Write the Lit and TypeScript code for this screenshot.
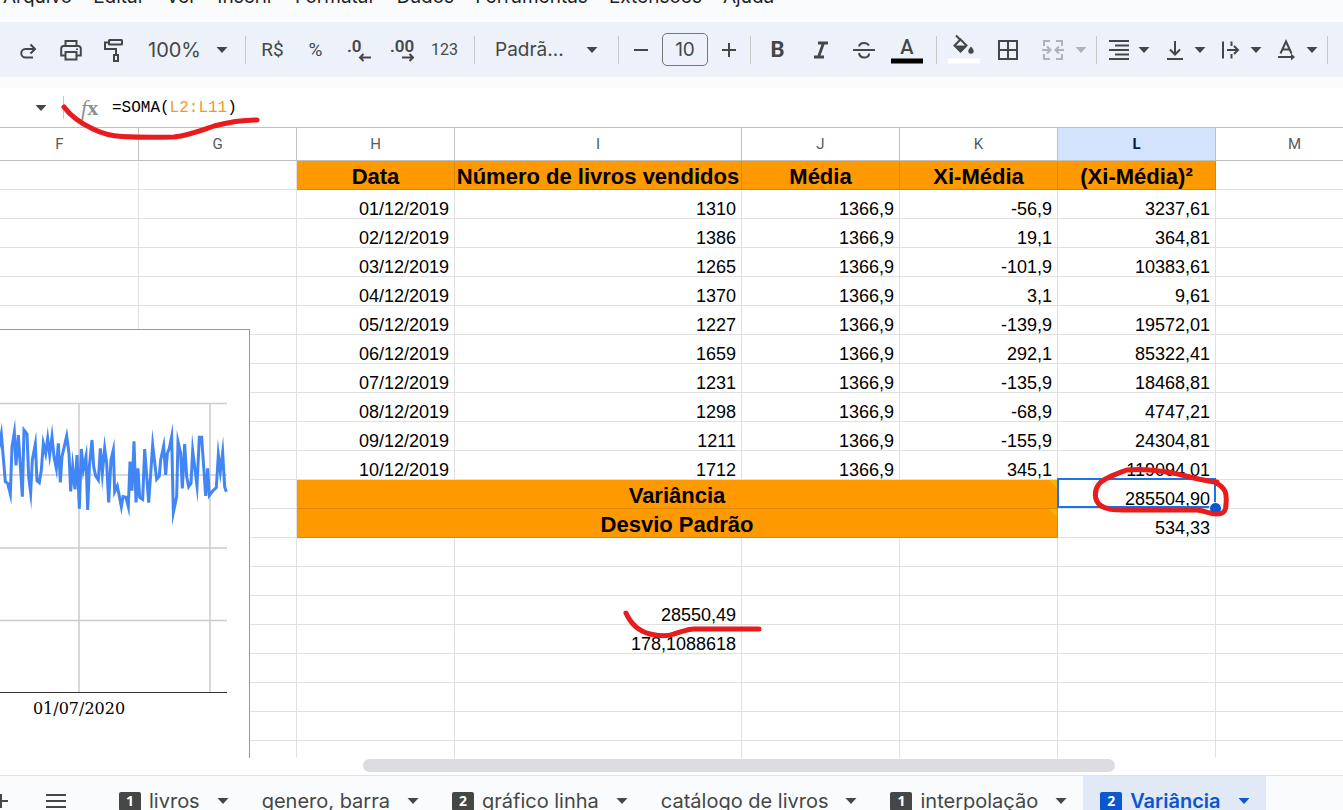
import { LitElement, html, svg, css, nothing } from "lit";
import { customElement, property, state } from "lit/decorators.js";
import { classMap } from "lit/directives/class-map.js";

const MENUS = ["Arquivo", "Editar", "Ver", "Inserir", "Formatar", "Dados", "Ferramentas", "Extensões", "Ajuda"];
const COLUMNS = ["F", "G", "H", "I", "J", "K", "L", "M"];
const HEADINGS = ["Data", "Número de livros vendidos", "Média", "Xi-Média", "(Xi-Média)²"];
const SALES: string[][] = [
  ["01/12/2019", "1310", "1366,9", "-56,9", "3237,61"],
  ["02/12/2019", "1386", "1366,9", "19,1", "364,81"],
  ["03/12/2019", "1265", "1366,9", "-101,9", "10383,61"],
  ["04/12/2019", "1370", "1366,9", "3,1", "9,61"],
  ["05/12/2019", "1227", "1366,9", "-139,9", "19572,01"],
  ["06/12/2019", "1659", "1366,9", "292,1", "85322,41"],
  ["07/12/2019", "1231", "1366,9", "-135,9", "18468,81"],
  ["08/12/2019", "1298", "1366,9", "-68,9", "4747,21"],
  ["09/12/2019", "1211", "1366,9", "-155,9", "24304,81"],
  ["10/12/2019", "1712", "1366,9", "345,1", "119094,01"],
];
const TAIL: string[] = ["", "", "28550,49", "178,1088618", "", "", "", "", ""];
const TABS: { name: string; notes?: number }[] = [
  { name: "livros", notes: 1 },
  { name: "genero, barra" },
  { name: "gráfico linha", notes: 2 },
  { name: "catálogo de livros" },
  { name: "interpolação", notes: 1 },
  { name: "Variância", notes: 2 },
];

const icons = {
  redo: svg`<path d="M18 11H9.500a4.200 4.200 0 0 0 0 8.500H17"/><path d="M14.500 6.500L19 11l-4.500 4.500"/>`,
  print: svg`<path d="M6.500 8V3h11v5M6.500 17.500H2.200v-7A2.500 2.500 0 0 1 4.700 8h14.600a2.500 2.500 0 0 1 2.500 2.500v7h-4.300"/><path d="M6.500 14h11v7.500h-11z"/><path d="M18 10.500v1.500" />`,
  paint: svg`<rect x="7" y="2" width="13" height="4.500" rx=".5"/><path d="M7 4.500H3v6.500h11v6"/><rect x="12" y="17" width="4" height="6"/>`,
  minus: svg`<path d="M5 12h14"/>`,
  plus: svg`<path d="M5 12h14M12 5v14"/>`,
  italic: svg`<path stroke-width="2.800" d="M9 5h10M5 19h10M14.500 5l-5 14"/>`,
  strike: svg`<path d="M1 12h22M7 8.500C7.500 6 9.500 5 12 5s4 1 5 2.500M7 15c.5 3 2.500 4.500 5.200 4.500 3 0 5-1.500 4.800-4"/>`,
  borders: svg`<path d="M3 3h18v18H3zM12 3v18M3 12h18"/>`,
  merge: svg`<path d="M9 3H3v5M15 3h6v5M9 21H3v-5M15 21h6v-5M1 12h8M23 12h-8M6 8.500L9.500 12 6 15.500M18 8.500L14.500 12l3.500 3.500"/>`,
  alignRight: svg`<path d="M2 3h20M8 7.500h14M2 12h20M8 16.500h14M2 21h20"/>`,
  alignBottom: svg`<path d="M12 3v13M7 11.500l5 5 5-5M4 21h16"/>`,
  wrap: svg`<path d="M4 3.500v17M8 12h11M15 8l4 4-4 4M12.500 3.500V8M12.500 16v4.500"/>`,
  rotate: svg`<path d="M5.500 15.500L11 3.500l5.500 12M7.500 11.500h7M3 19h15"/><path d="M16 15.500l4 3.500-4 3.500z" fill="currentColor" stroke="none"/>`,
  list: svg`<path d="M2 6h20M2 12h20M2 18h20"/>`,
};

const icon = (shape: unknown) =>
  html`<svg class="icon" viewBox="0 0 24 24" width="24" height="24" aria-hidden="true">${shape}</svg>`;
const caret = () =>
  html`<svg class="caret" viewBox="0 0 12 6" width="12" height="6" aria-hidden="true"><path d="M.5 0h11L6 6z"/></svg>`;

const shared = css`
  * { box-sizing: border-box; }
  button, select, input { font: inherit; color: inherit; background: none; border: 0; padding: 0; margin: 0; }
  button { cursor: pointer; display: flex; align-items: center; justify-content: center; }
  .icon { fill: none; stroke: currentColor; stroke-width: 2; display: block; flex: none; }
  .caret { fill: currentColor; display: block; flex: none; }
`;

@customElement("sheet-toolbar")
class SheetToolbar extends LitElement {
  static styles = [shared, css`
    :host { display: flex; align-items: center; flex: none; height: 55px; padding-left: 6px; background: #edf1fa; color: #444746; font: 16px Roboto, sans-serif; overflow: hidden; }
    .tool { flex: none; width: 43px; height: 36px; }
    .sep { flex: none; width: 1px; height: 28px; margin: 0 5px 0 8px; background: #c7c7c7; }
    .picker { flex: none; display: grid; align-items: center; height: 36px; font: 20px Inter, sans-serif; }
    .picker > * { grid-area: 1 / 1; }
    .picker select { appearance: none; width: 100%; height: 36px; }
    .picker .caret { justify-self: end; pointer-events: none; }
    .zoom { width: 102px; }
    .zoom select { padding-left: 13px; }
    .zoom .caret { margin-right: 9px; }
    .family { width: 130px; font-size: 19px; }
    .family select { padding-left: 15px; }
    .family .caret { margin-right: 12px; }
    .stepper { display: flex; flex: none; align-items: center; gap: 4px; margin-right: -4px; }
    .step { width: 34px; height: 34px; }
    .size { width: 46px; height: 33px; border: 1px solid #747775; border-radius: 5px; text-align: center; font: 19px Inter, sans-serif; }
    .money { font-size: 19px; }
    .bold { font: 700 22px Roboto, sans-serif; }
    .glyph { fill: currentColor; stroke: none; font: 600 17px Roboto, sans-serif; }
    .letter { fill: currentColor; stroke: none; font: 500 20px Roboto, sans-serif; }
    .borders { width: 46px; }
    .merge { color: #b0b2b6; }
    .merge-more { width: 14px; height: 36px; flex: none; color: #b0b2b6; }
    .pairs { display: flex; flex: none; margin-right: -7px; }
    .pair { width: 56px; height: 36px; justify-content: flex-start; padding-left: 5px; gap: 7px; }
  `];
  render() {
    return html`
      <button class="tool" aria-label="Refazer">${icon(icons.redo)}</button>
      <button class="tool" aria-label="Imprimir">${icon(icons.print)}</button>
      <button class="tool" aria-label="Pintar formatação">${icon(icons.paint)}</button>
      <label class="picker zoom"><select aria-label="Zoom"><option>100%</option></select>${caret()}</label>
      <span class="sep"></span>
      <button class="tool money">R$</button>
      <button class="tool money">%</button>
      <button class="tool" aria-label="Diminuir casas decimais">
        <svg class="icon" viewBox="0 0 24 24" width="24" height="24"><text class="glyph" x="0" y="14">.0</text><path d="M24 19.500H13M16.500 16L13 19.500l3.500 3.500"/></svg>
      </button>
      <button class="tool" aria-label="Aumentar casas decimais">
        <svg class="icon" viewBox="0 0 24 24" width="24" height="24"><text class="glyph" x="0" y="14">.00</text><path d="M12 19.500h11M19.500 16l3.500 3.500-3.500 3.500"/></svg>
      </button>
      <button class="tool">123</button>
      <span class="sep"></span>
      <label class="picker family"><select aria-label="Fonte"><option>Padrã...</option></select>${caret()}</label>
      <span class="sep"></span>
      <div class="stepper">
        <button class="step" aria-label="Diminuir tamanho">${icon(icons.minus)}</button>
        <input class="size" aria-label="Tamanho da fonte" value="10" />
        <button class="step" aria-label="Aumentar tamanho">${icon(icons.plus)}</button>
      </div>
      <span class="sep"></span>
      <button class="tool bold">B</button>
      <button class="tool" aria-label="Itálico">${icon(icons.italic)}</button>
      <button class="tool" aria-label="Tachado">${icon(icons.strike)}</button>
      <button class="tool" aria-label="Cor do texto">
        <svg class="icon" viewBox="0 0 32 32" width="32" height="32"><text class="letter" x="16" y="20" text-anchor="middle">A</text><rect x="0" y="24.500" width="32" height="5" fill="#000" stroke="none"/></svg>
      </button>
      <span class="sep"></span>
      <button class="tool" aria-label="Cor de preenchimento">
        <svg class="icon" viewBox="0 0 32 32" width="32" height="32"><path d="M8 1.500l5 5M12.500 5.500l6 6-6 6-6-6z"/><path d="M6 11.500h13l-6.500 7z" fill="currentColor" stroke="none"/><path d="M23 12.500c2 2.500 2.700 3.500 2.700 4.500a2.700 2.700 0 0 1-5.400 0c0-1 .7-2 2.700-4.500z" fill="currentColor" stroke="none"/><rect x="0" y="24.500" width="32" height="5" fill="#fff" stroke="none"/></svg>
      </button>
      <button class="tool borders" aria-label="Bordas">${icon(icons.borders)}</button>
      <button class="tool merge" aria-label="Mesclar células">${icon(icons.merge)}</button>
      <button class="merge-more" aria-label="Tipo de mesclagem">${caret()}</button>
      <span class="sep"></span>
      <div class="pairs">
        <button class="pair" aria-label="Alinhamento horizontal">${icon(icons.alignRight)}${caret()}</button>
        <button class="pair" aria-label="Alinhamento vertical">${icon(icons.alignBottom)}${caret()}</button>
        <button class="pair" aria-label="Ajuste de texto">${icon(icons.wrap)}${caret()}</button>
        <button class="pair" aria-label="Rotação de texto">${icon(icons.rotate)}${caret()}</button>
      </div>
      <span class="sep"></span>
    `;
  }
}

@customElement("sales-chart")
class SalesChart extends LitElement {
  static styles = css`
    :host { display: block; box-sizing: border-box; width: 250px; height: 440px; background: #fff; border: solid #999; border-width: 1px 1px 0 0; }
    svg { display: block; }
    .grid { stroke: #ccc; stroke-width: 1.500; fill: none; }
    .axis { stroke: #333; stroke-width: 1; }
    .series { fill: none; stroke: #4285f4; stroke-width: 9; stroke-linejoin: miter; stroke-miterlimit: 12; }
    .label { font: 16px "DejaVu Serif", serif; fill: #000; text-anchor: middle; }
  `;
  render() {
    return html`<svg viewBox="0 0 249 428" width="249" height="428" role="img" aria-label="Gráfico de livros vendidos">
      <path class="grid" d="M0 73.500H227M0 145H227M0 218H227M0 290.500H227M79 73.500V362M210 73.500V362"/>
      <path class="axis" d="M0 362.500H227"/>
      <polyline class="series" transform="translate(0 -20) scale(.33333)" points="-6,430 4,372 16,515 23,520 31,552 36,410 43,368 48,466 55,375 67,560 72,360 81,372 86,500 92,548 97,450 106,402 111,512 118,518 124,480 130,400 137,430 143,385 149,435 156,380 162,440 169,475 175,400 181,517 186,440 200,378 207,430 212,544 218,470 225,538 231,435 238,596 244,417 250,480 258,440 263,600 268,470 276,390 281,470 287,498 295,510 301,415 307,490 314,415 320,460 326,577 333,450 340,420 344,545 352,528 364,590 369,560 378,562 385,590 390,455 396,542 402,394 408,577 414,475 419,562 428,568 434,417 446,578 458,405 470,508 478,498 482,450 491,408 497,495 502,430 508,415 515,380 520,608 530,560 534,395 542,430 547,535 554,402 560,500 566,530 573,520 578,422 591,527 598,382 605,382 617,558 623,475 628,556 638,543 649,533 655,435 661,485 668,428 674,530 679,545"/>
      <text class="label" x="79" y="384">01/07/2020</text>
    </svg>`;
  }
}

@customElement("sheet-grid")
class SheetGrid extends LitElement {
  static styles = css`
    :host { display: block; position: relative; flex: 1; min-height: 0; overflow: hidden; background: #fff; }
    table { table-layout: fixed; width: 1393px; margin-left: -19px; border-collapse: separate; border-spacing: 0; font: 18px/18px "Liberation Sans", Arial, sans-serif; color: #000; }
    col { width: 158px; }
    .wide { width: 287px; }
    th, td { box-sizing: border-box; padding: 0 5px 0 0; border: solid #e1e1e1; border-width: 0 1px 1px 0; text-align: right; vertical-align: bottom; white-space: nowrap; }
    td { height: 29px; }
    th { height: 33px; padding: 0; border-color: #c0c0c0; background: #fff; font-size: 15px; font-weight: 400; font-family: Roboto, sans-serif; text-align: center; vertical-align: middle; color: #575a5a; }
    .current { background: #d3e3fd; color: #041e49; font-weight: 700; }
    .title { padding: 4px 0 0; background: #ff9900; border-color: #e08700; text-align: center; vertical-align: middle; font-size: 22px; line-height: 24px; font-weight: 700; }
    .merged { position: relative; }
    .merged::after { content: ""; position: absolute; top: 0; right: 0; border: 4px solid transparent; border-top-color: #f4b400; border-right-color: #f4b400; }
    .selected { position: relative; }
    .selected::after { content: ""; position: absolute; inset: -2px -1px 0 -1px; border: 2px solid #1a73e8; }
    .handle { position: absolute; right: -7px; bottom: -7px; z-index: 1; box-sizing: border-box; width: 13px; height: 13px; border: 1px solid #fff; border-radius: 50%; background: #0b57d0; }
    sales-chart { position: absolute; left: 0; top: 201px; }
  `;
  render() {
    const blank = html`<td></td>`;
    return html`
      <table>
        <colgroup>${COLUMNS.map((c) => html`<col class=${c === "I" ? "wide" : ""}>`)}</colgroup>
        <thead><tr>${COLUMNS.map((c) => html`<th scope="col" class=${c === "L" ? "current" : ""}>${c}</th>`)}</tr></thead>
        <tbody>
          <tr>${blank}${blank}${HEADINGS.map((h) => html`<td class="title">${h}</td>`)}${blank}</tr>
          ${SALES.map((row) => html`<tr>${blank}${blank}${row.map((v) => html`<td>${v}</td>`)}${blank}</tr>`)}
          <tr>${blank}${blank}<td class="title merged" colspan="4">Variância</td><td class="selected">285504,90<span class="handle"></span></td>${blank}</tr>
          <tr>${blank}${blank}<td class="title merged" colspan="4">Desvio Padrão</td><td>534,33</td>${blank}</tr>
          ${TAIL.map((v) => html`<tr>${COLUMNS.map((c) => html`<td>${c === "I" ? v : nothing}</td>`)}</tr>`)}
        </tbody>
      </table>
      <sales-chart></sales-chart>
    `;
  }
}

@customElement("sheet-tabs")
class SheetTabs extends LitElement {
  @property({ type: Number }) active = 5;
  static styles = [shared, css`
    :host { display: flex; flex: none; align-items: flex-start; height: 35px; overflow: hidden; background: #f9fbfd; border-top: 1px solid #e1e3e1; color: #444746; font: 20px/24px Inter, sans-serif; }
    .add { width: 24px; height: 50px; margin-left: -11px; flex: none; }
    .all { width: 86px; height: 50px; margin-right: 3px; flex: none; }
    .tab { height: 50px; padding: 0 16px 0 17px; flex: none; white-space: nowrap; }
    .tab .caret { margin-left: 17px; }
    .on { background: #e1e9f7; color: #0b57d0; font-weight: 600; }
    .note { display: block; width: 22px; height: 19px; margin-right: 8px; border-radius: 2px 2px 0 2px; background: #444746; color: #fff; font: 700 14px/18px "Open Sans", sans-serif; }
    .on .note { background: #0b57d0; }
  `];
  render() {
    return html`
      <button class="add" aria-label="Adicionar página">${icon(icons.plus)}</button>
      <button class="all" aria-label="Todas as páginas">${icon(icons.list)}</button>
      ${TABS.map((t, i) => html`
        <button class=${classMap({ tab: true, on: i === this.active })} @click=${() => (this.active = i)}>
          ${t.notes ? html`<span class="note">${t.notes}</span>` : nothing}<span>${t.name}</span>${caret()}
        </button>`)}
    `;
  }
}

@customElement("app-root")
class AppRoot extends LitElement {
  @state() range = "L2:L11";
  static styles = [shared, css`
    :host { display: flex; flex-direction: column; position: relative; height: 100vh; overflow: hidden; background: #f9fbfd; }
    .menus { display: flex; flex: none; align-items: flex-end; gap: 21px; height: 22px; padding: 0 0 13px 3px; font: 19px/24px Inter, sans-serif; color: #1f1f1f; }
    .formula { display: flex; flex: none; align-items: center; height: 40px; margin-top: 11px; padding-left: 35px; background: #fff; border-bottom: 1px solid #c0c0c0; color: #444746; }
    .name { width: 12px; height: 24px; }
    .bar { width: 1px; height: 23px; margin-left: 16px; background: #c7c7c7; }
    .fx { width: 31px; margin-left: 17px; font: 700 22px/24px "Liberation Serif", serif; color: #8d9091; }
    .fx i { font-weight: 400; }
    .expr { flex: 1; font: 16px/24px "Liberation Mono", monospace; color: #000; outline: 0; }
    .range { color: #f7981d; }
    .scroll { flex: none; height: 17px; padding: 1px 0; background: #fff; }
    .thumb { width: 56%; height: 13px; margin-left: 27%; border-radius: 7px; background: #dadce0; }
    .ink { position: absolute; left: 0; top: 0; z-index: 3; pointer-events: none; fill: none; stroke: #e81c1c; stroke-width: 5; stroke-linecap: round; stroke-linejoin: round; }
  `];
  render() {
    return html`
      <nav class="menus">${MENUS.map((m) => html`<button>${m}</button>`)}</nav>
      <sheet-toolbar></sheet-toolbar>
      <div class="formula">
        <button class="name" aria-label="Caixa de nome">${caret()}</button>
        <span class="bar"></span>
        <span class="fx"><i>f</i>x</span>
        <div class="expr" role="textbox" aria-label="Fórmula" contenteditable="true" spellcheck="false">=SOMA(<span class="range">${this.range}</span>)</div>
      </div>
      <sheet-grid></sheet-grid>
      <div class="scroll"><div class="thumb"></div></div>
      <sheet-tabs></sheet-tabs>
      <svg class="ink" width="1343" height="810" viewBox="0 0 1343 810" aria-hidden="true">
        <path d="M64 107C70 115 80 123 93 129C103 134 113 136 122 136.500C140 137.500 158 137.500 174 137C190 135 202 130 214 126C229 122 243 120 257 120"/>
        <path d="M1217 482C1206 482 1185 475 1167 472C1150 469 1137 469 1127 470C1116 474 1104 478 1099 484C1094 490 1094 500 1100 505C1106 510 1114 510 1124 510L1197 510C1206 511 1210 514 1216 514C1224 514 1226 511 1226 504C1227 494 1226 488 1216 483"/>
        <path d="M626 613C630 622 638 631 650 634C658 636 668 636 674 634C681 632 688 629 694 629L759 629"/>
      </svg>
    `;
  }
}
